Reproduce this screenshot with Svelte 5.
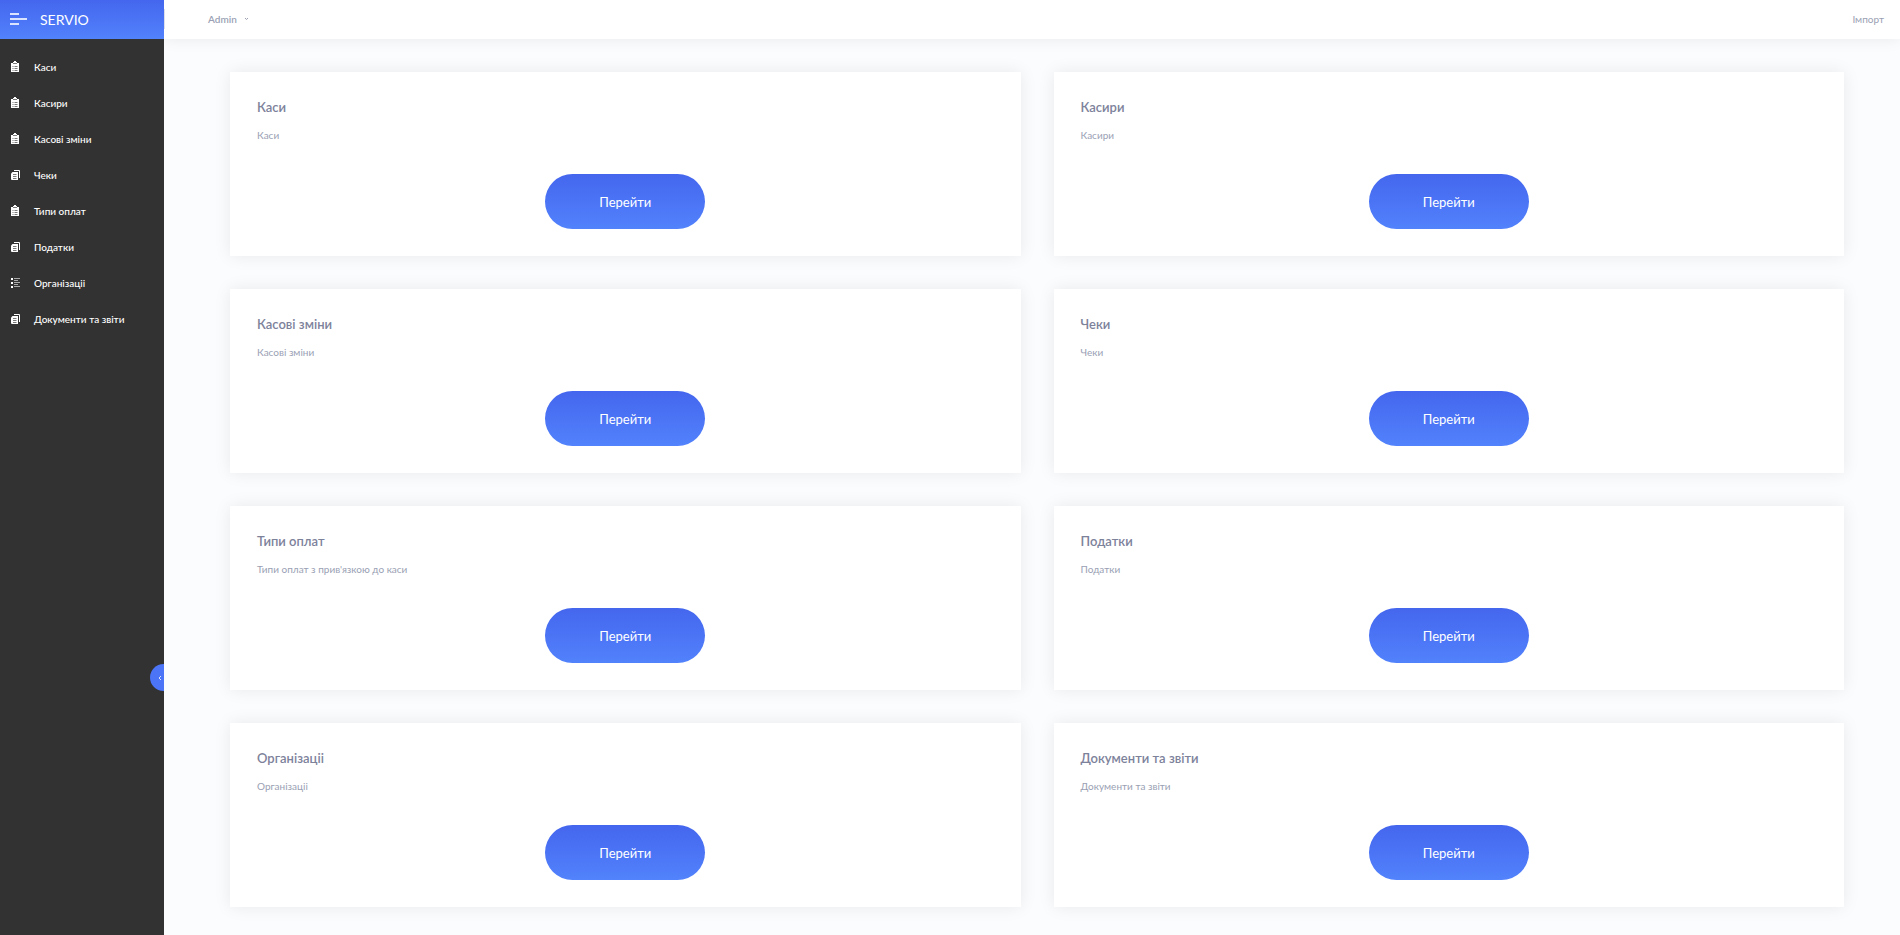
<script lang="ts">
  type Icon = 'clipboard' | 'copy' | 'list'

  const sections: { title: string; text: string; icon: Icon }[] = [
    { title: 'Каси', text: 'Каси', icon: 'clipboard' },
    { title: 'Касири', text: 'Касири', icon: 'clipboard' },
    { title: 'Касові зміни', text: 'Касові зміни', icon: 'clipboard' },
    { title: 'Чеки', text: 'Чеки', icon: 'copy' },
    { title: 'Типи оплат', text: "Типи оплат з прив'язкою до каси", icon: 'clipboard' },
    { title: 'Податки', text: 'Податки', icon: 'copy' },
    { title: 'Організаціі', text: 'Організаціі', icon: 'list' },
    { title: 'Документи та звіти', text: 'Документи та звіти', icon: 'copy' },
  ]
</script>

<div class="layout">
  <aside class="sidebar">
    <div class="brand">
      <button type="button" class="menu-btn" aria-label="Меню">
        <svg width="18" height="14" viewBox="0 0 18 14" fill="none" stroke="#dbe4ff" stroke-width="2"><path d="M0 2h9M0 7h17M0 12h9"/></svg>
      </button>
      <a class="logo" href="#home">SERVIO</a>
    </div>

    <nav class="menu">
      {#each sections as section}
        <a href="#{section.title}">
          {#if section.icon === 'clipboard'}
            <svg width="10" height="12" viewBox="0 0 10 12"><path fill="#fff" d="M0 2h2V1h1V0h2v1h1v1h2v9H0z"/><path stroke="#323232" stroke-opacity=".65" d="M2 2.500h4M1.500 5.500h1M3.500 5.500h3M1.500 7.500h1M3.500 7.500h3M1.500 9.500h1M3.500 9.500h3"/></svg>
          {:else if section.icon === 'copy'}
            <svg width="10" height="12" viewBox="0 0 10 12"><path fill="none" stroke="#fff" d="M3 1.500h5.500V9"/><path fill="#fff" d="M1.500 3H7v8H1a1 1 0 0 1-1-1V4.500z"/><path stroke="#323232" stroke-opacity=".65" d="M2 5.500h3.500M2 7.500h3.500M2 9.500h3.500"/></svg>
          {:else}
            <svg width="10" height="12" viewBox="0 0 10 12"><path fill="#fff" d="M0 1h2v2H0zM0 5h2v2H0zM0 9h2v2H0z"/><path stroke="#aaa" d="M3 1.500h6M3 3.500h4M3 5.500h6M3 7.500h4M3 9.500h6"/></svg>
          {/if}
          {section.title}
        </a>
      {/each}
    </nav>

    <button type="button" class="collapse" aria-label="Згорнути меню">
      <svg width="4" height="6" viewBox="0 0 4 6" fill="none" stroke="#dbe4ff"><path d="M3 1L1 3l2 2"/></svg>
    </button>
  </aside>

  <div class="page">
    <header class="topbar">
      <span class="divider"></span>
      <button type="button" class="user">
        Admin
        <svg width="5" height="4" viewBox="0 0 5 4" fill="none" stroke="currentColor"><path d="M1 1l1.500 1.500L4 1"/></svg>
      </button>
      <a class="import" href="#import">Імпорт</a>
    </header>

    <main class="cards">
      {#each sections as section}
        <section class="card">
          <h2>{section.title}</h2>
          <p>{section.text}</p>
          <button type="button" class="go">Перейти</button>
        </section>
      {/each}
    </main>
  </div>
</div>

<style>
  :global(body) {
    background: #fbfcfe;
    font-family: Lato, 'Open Sans', sans-serif;
  }

  .layout {
    display: flex;
    min-height: 100vh;
  }

  a {
    color: inherit;
    text-decoration: none;
  }

  button {
    border: none;
    padding: 0;
    background: none;
    color: inherit;
    font: inherit;
    cursor: pointer;
  }

  .sidebar {
    position: relative;
    flex: none;
    width: 164px;
    background: #323232;
    color: #fff;
  }

  .brand {
    display: flex;
    align-items: center;
    gap: 12px;
    height: 38px;
    padding: 0 0 1px 10px;
    background: linear-gradient(#4466ee, #5282fc);
  }

  .menu-btn,
  .menu-btn svg {
    display: block;
  }

  .logo {
    font-size: 14px;
  }

  .menu {
    padding-top: 10px;
  }

  .menu a {
    display: flex;
    align-items: center;
    gap: 13px;
    height: 36px;
    padding-left: 11px;
    font-size: 10px;
    font-weight: 500;
  }

  /* Half pill stuck to the sidebar edge */
  .collapse {
    position: absolute;
    right: 0;
    bottom: 244px;
    display: flex;
    align-items: center;
    justify-content: flex-end;
    width: 14px;
    height: 27px;
    padding-right: 2px;
    border-radius: 14px 0 0 14px;
    background: #4b74f6;
  }

  .page {
    flex: 1;
    min-width: 0;
  }

  .topbar {
    display: flex;
    align-items: center;
    height: 37px;
    padding: 0 16px 2px 0;
    background: #fff;
    box-shadow: 0 0 16px rgba(0, 0, 0, 0.08);
    color: #9a9fb4;
    font-size: 10px;
  }

  .divider {
    width: 1px;
    height: 20px;
    margin-right: 43px;
    background: #dde0ea;
  }

  .user {
    display: flex;
    align-items: center;
    gap: 7px;
    font-weight: 600;
  }

  .import {
    margin-left: auto;
  }

  .cards {
    display: grid;
    grid-template-columns: 1fr 1fr;
    gap: 33px;
    padding: 33px 56px 28px 66px;
  }

  .card {
    display: flex;
    flex-direction: column;
    padding: 26px 27px 27px;
    background: #fff;
    box-shadow: 0 0 16px rgba(0, 0, 0, 0.08);
  }

  .card h2 {
    margin: 0;
    color: #7d829b;
    font-size: 13px;
    line-height: 18px;
    font-weight: 600;
  }

  .card p {
    margin: 12px 0 32px;
    color: #9a9fb4;
    font-size: 10px;
    line-height: 14px;
  }

  .go {
    align-self: center;
    width: 160px;
    height: 55px;
    border-radius: 28px;
    background: linear-gradient(#4466ee, #5282fc);
    color: #fff;
    font-size: 13px;
  }
</style>
